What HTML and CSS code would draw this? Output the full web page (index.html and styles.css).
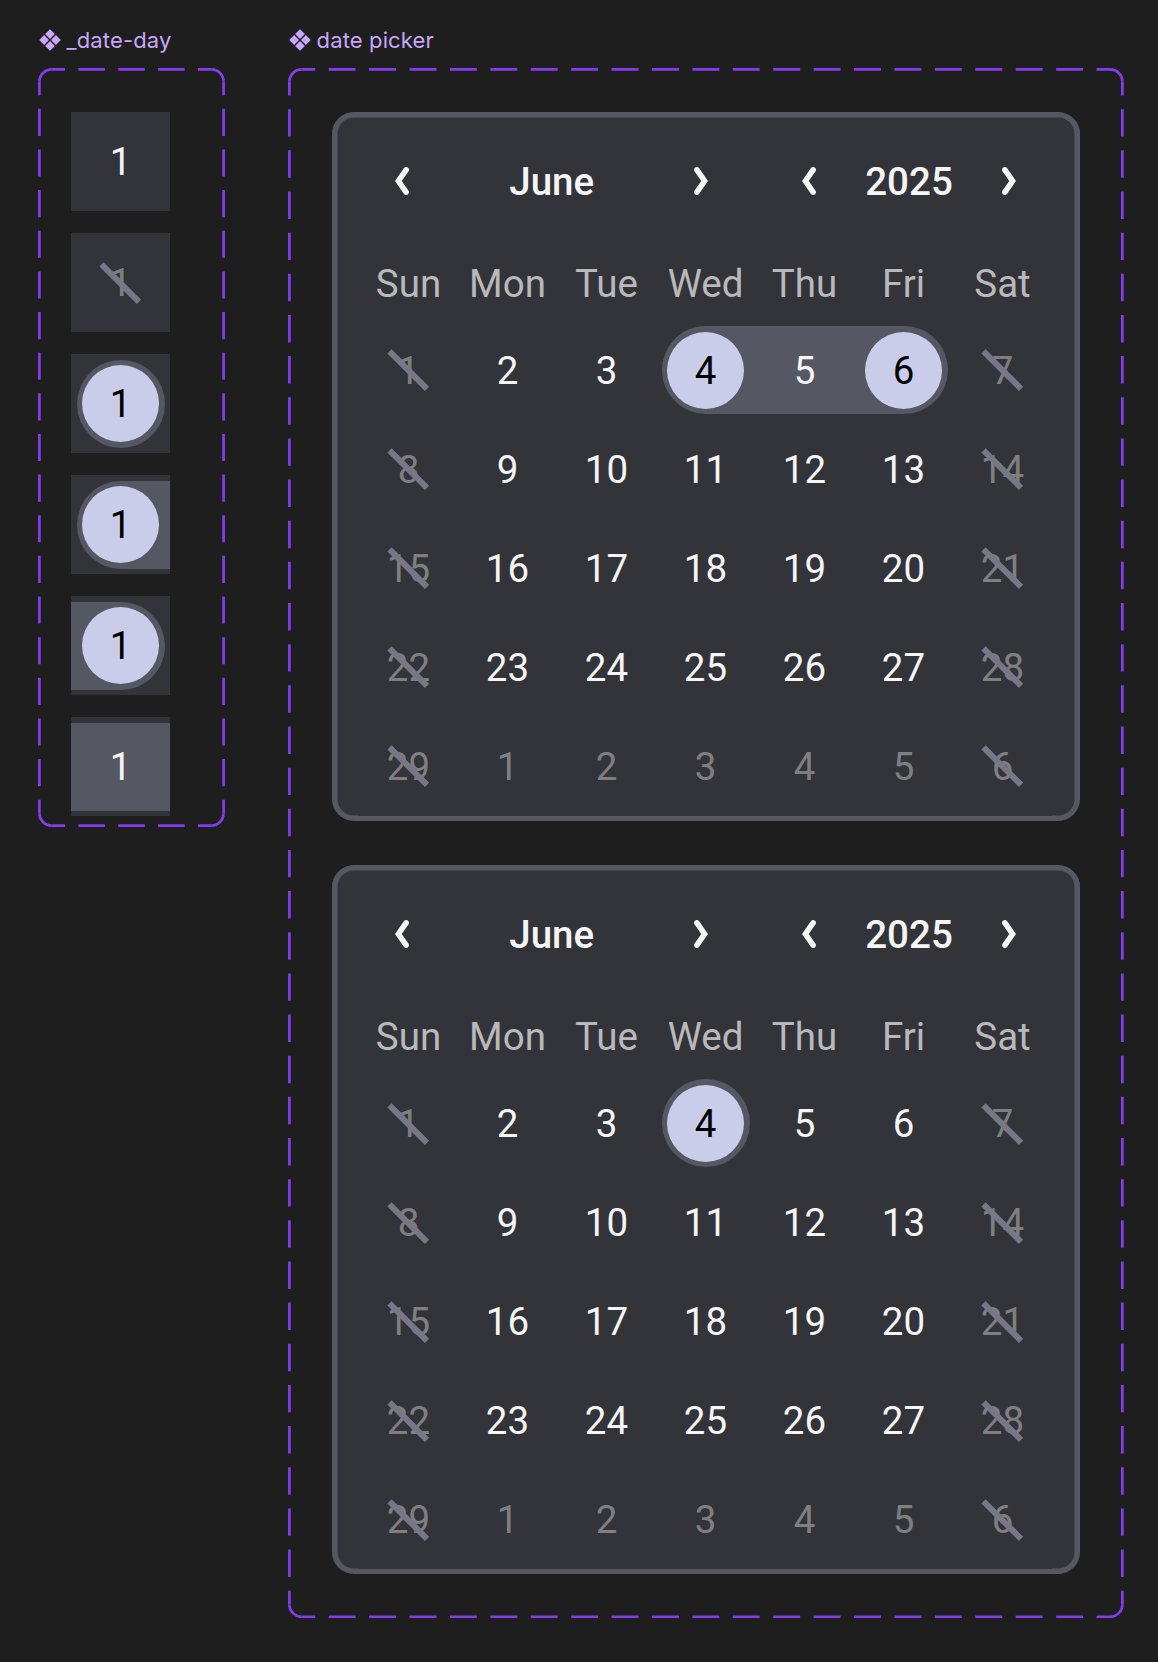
FILE: index.html
```
<!DOCTYPE html>
<html lang="en">
<head>
    <meta charset="UTF-8">
    <meta name="viewport" content="width=device-width, initial-scale=1.0">
    <title>Date Picker</title>
    <link rel="stylesheet" href="styles.css">
</head>
<body>
    <!-- shared icons -->
    <svg class="icon-defs" width="0" height="0">
        <symbol id="component" viewBox="0 0 22 22">
            <path d="M11 0.2L15.9 5.1L11 10L6.1 5.1ZM11 12L15.9 16.9L11 21.8L6.1 16.9ZM5.1 6.1L10 11L5.1 15.9L0.2 11ZM16.9 6.1L21.8 11L16.9 15.9L12 11Z"/>
        </symbol>
        <symbol id="chevron-left" viewBox="0 0 14 28">
            <path d="M11.1 2.9L3.4 14L11.1 25.1"/>
        </symbol>
        <symbol id="chevron-right" viewBox="0 0 14 28">
            <path d="M2.9 2.9L10.6 14L2.9 25.1"/>
        </symbol>
    </svg>

    <section class="component component-day">
        <h2 class="component-title"><svg><use href="#component"/></svg>_date-day</h2>
        <div class="frame">
            <svg class="outline" width="187" height="759">
                <path d="M1.4 13.75A12.35 12.35 0 0 1 13.75 1.4M173.25 1.4A12.35 12.35 0 0 1 185.6 13.75M185.6 745.25A12.35 12.35 0 0 1 173.25 757.6M13.75 757.6A12.35 12.35 0 0 1 1.4 745.25"/>
                <path class="dashed" pathLength="12" d="M13.75 1.4H173.25"/>
                <path class="dashed" pathLength="12" d="M13.75 757.6H173.25"/>
                <path class="dashed" pathLength="54" d="M1.4 13.75V745.25"/>
                <path class="dashed" pathLength="54" d="M185.6 13.75V745.25"/>
            </svg>
            <div class="day"><span>1</span></div>
            <div class="day disabled"><span>1</span></div>
            <div class="day selected"><span>1</span></div>
            <div class="day selected range-start"><span>1</span></div>
            <div class="day selected range-end"><span>1</span></div>
            <div class="day in-range"><span>1</span></div>
        </div>
    </section>

    <section class="component component-picker">
        <h2 class="component-title"><svg><use href="#component"/></svg>date picker</h2>
        <div class="frame">
            <svg class="outline" width="836" height="1550.4">
                <path d="M1.4 13.75A12.35 12.35 0 0 1 13.75 1.4M822 1.4A12.35 12.35 0 0 1 834.35 13.75M834.35 1536.4A12.35 12.35 0 0 1 822 1548.75M13.75 1548.75A12.35 12.35 0 0 1 1.4 1536.4"/>
                <path class="dashed" pathLength="60" d="M13.75 1.4H822"/>
                <path class="dashed" pathLength="60" d="M13.75 1548.75H822"/>
                <path class="dashed" pathLength="111" d="M1.4 13.75V1536.4"/>
                <path class="dashed" pathLength="111" d="M834.35 13.75V1536.4"/>
            </svg>
            <div class="picker" data-start="4" data-end="6"></div>
            <div class="picker" data-start="4" data-end="4"></div>
        </div>
    </section>

    <script src="script.js"></script>
</body>
</html>
```
FILE: styles.css
```
* {
    box-sizing: border-box;
}
body {
    margin: 0;
    padding: 24px 34px 0 38px;
    min-height: 1662px;
    display: flex;
    align-items: flex-start;
    gap: 63px;
    background-color: #1e1e1e;
    color: #f5f5f5;
    font-family: Roboto, "Liberation Sans", sans-serif;
    font-size: 38.5px;
}
.icon-defs {
    position: absolute;
}

/* Component frames */
.component-title {
    display: flex;
    align-items: center;
    gap: 6px;
    height: 32px;
    margin: 0 0 12px;
    padding-left: 0.6px;
    color: #c9a6fb;
    font-family: Inter, "Liberation Sans", sans-serif;
    font-size: 22px;
    font-weight: 400;
    letter-spacing: 0.13px;
    line-height: 32px;
    white-space: nowrap;
}
.component-title svg {
    width: 22px;
    height: 22px;
    fill: currentColor;
}
.frame {
    position: relative;
    display: flex;
    flex-direction: column;
    padding: 44px 44px 0;
}
.component-day .frame {
    width: 187px;
    height: 759px;
    gap: 22px;
    padding-left: 33px;
}
.component-picker .frame {
    width: 836px;
    height: 1550.4px;
    gap: 44px;
}
.outline {
    position: absolute;
    top: 0;
    left: 0;
    fill: none;
    stroke: #833cec;
    stroke-width: 2.75;
}
.outline .dashed {
    stroke-dasharray: 2 1;
    stroke-dashoffset: 1;
}

/* Day cell */
.day {
    position: relative;
    display: flex;
    align-items: center;
    justify-content: center;
    width: 99px;
    height: 99px;
    background-color: #333439;
}
.day span {
    position: relative;
    line-height: 77px;
    text-align: center;
}
.day.muted,
.day.disabled {
    color: #7f7f82;
}
.day.disabled::after {
    content: "";
    position: absolute;
    top: 46.75px;
    left: 23.25px;
    width: 52.5px;
    height: 5.5px;
    background-color: #777788;
    transform: rotate(45deg);
}
.day.selected {
    color: #000;
}
.day.selected span {
    width: 77px;
    height: 77px;
    border-radius: 50%;
    background-color: #c9cdea;
}
.day.selected::before,
.day.in-range::before {
    content: "";
    position: absolute;
    inset: 5.5px;
    border-radius: 44px;
    background-color: #555762;
}
.day.range-start::before {
    right: 0;
    border-radius: 44px 0 0 44px;
}
.day.range-end::before {
    left: 0;
    border-radius: 0 44px 44px 0;
}
.day.in-range::before {
    left: 0;
    right: 0;
    border-radius: 0;
}

/* Picker */
.picker {
    width: 748px;
    height: 709.2px;
    padding: 41px 28px 0 27px;
    border-radius: 22px;
    background-color: #333439;
    box-shadow: inset 0 0 0 5.5px #555762;
}
.picker-header {
    display: flex;
    justify-content: space-between;
    height: 56px;
    padding: 0 21px;
    font-weight: 500;
}
.stepper {
    display: flex;
    align-items: center;
    justify-content: space-between;
    width: 343.4px;
}
.stepper.year {
    width: 244px;
}
.stepper button {
    display: flex;
    align-items: center;
    justify-content: center;
    width: 44px;
    height: 44px;
    padding: 0;
    border: none;
    background: none;
    color: inherit;
}
.stepper svg {
    width: 14px;
    height: 28px;
    fill: none;
    stroke: currentColor;
    stroke-width: 5.6;
    stroke-linecap: round;
}
.weekdays,
.days {
    display: grid;
    grid-template-columns: repeat(7, 99px);
}
.weekdays {
    height: 111.6px;
    padding-top: 51px;
    color: #b9b9bb;
    line-height: 48px;
    text-align: center;
}
```
FILE: script.js
```
const weekdays = ['Sun', 'Mon', 'Tue', 'Wed', 'Thu', 'Fri', 'Sat'];

const stepper = (name, value) => `
    <div class="stepper ${name}">
        <button aria-label="Previous ${name}"><svg><use href="#chevron-left"/></svg></button>
        <span>${value}</span>
        <button aria-label="Next ${name}"><svg><use href="#chevron-right"/></svg></button>
    </div>`;

// Class list for the day at position i (0 = Sunday, June 1)
const dayClass = (i, start, end) => {
    const day = i + 1;
    const classes = ['day'];
    if (i % 7 === 0 || i % 7 === 6) classes.push('disabled');
    if (day > 29) classes.push('muted');
    if (day === start || day === end) classes.push('selected');
    if (start !== end) {
        if (day === start) classes.push('range-start');
        if (day === end) classes.push('range-end');
        if (day > start && day < end) classes.push('in-range');
    }
    return classes.join(' ');
};

document.querySelectorAll('.picker').forEach(picker => {
    const start = Number(picker.dataset.start);
    const end = Number(picker.dataset.end);
    let days = '';
    for (let i = 0; i < 35; i++) {
        // the last row runs over into the next month after the 29th
        const label = i < 29 ? i + 1 : i - 28;
        days += `<div class="${dayClass(i, start, end)}"><span>${label}</span></div>`;
    }
    picker.innerHTML = `
        <div class="picker-header">${stepper('month', 'June')}${stepper('year', '2025')}</div>
        <div class="weekdays">${weekdays.map(d => `<span>${d}</span>`).join('')}</div>
        <div class="days">${days}</div>`;
});
```
